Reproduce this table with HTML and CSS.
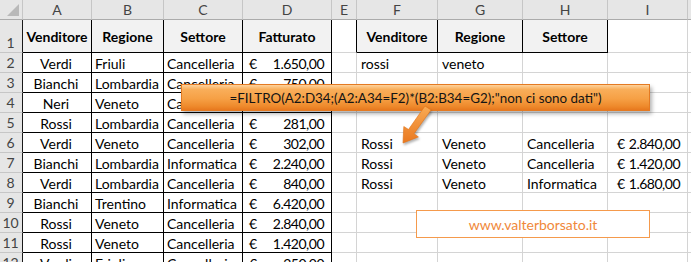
FILE: index.html
```html
<!DOCTYPE html>
<html lang="it">
<head>
<meta charset="utf-8">
<title>FILTRO</title>
<link rel="stylesheet" href="styles.css">
</head>
<body>
<div class="sheet">
  <!-- column headers -->
  <div class="corner"><span class="corner-tri"></span></div>
  <div class="ch">A</div><div class="ch">B</div><div class="ch">C</div><div class="ch">D</div><div class="ch">E</div>
  <div class="ch">F</div><div class="ch">G</div><div class="ch">H</div><div class="ch">I</div><div class="ch ch-last"></div>

  <!-- row 1 -->
  <div class="rh rh-tall rh-edge">1</div>
  <div class="c hd bk">Venditore</div><div class="c hd bk">Regione</div><div class="c hd bk">Settore</div><div class="c hd bk">Fatturato</div>
  <div class="c bk-r"></div>
  <div class="c hd bk">Venditore</div><div class="c hd bk">Regione</div><div class="c hd bk">Settore</div>
  <div class="c"></div><div class="c c-last"></div>

  <!-- row 2 -->
  <div class="rh rh-edge">2</div>
  <div class="c bk ctr">Verdi</div><div class="c bk">Friuli</div><div class="c bk">Cancelleria</div>
  <div class="c bk cur"><span>€</span><span class="amt">1.650,00</span></div>
  <div class="c"></div>
  <div class="c txt">rossi</div><div class="c txt">veneto</div><div class="c"></div><div class="c"></div><div class="c c-last"></div>

  <!-- row 3 -->
  <div class="rh rh-edge">3</div>
  <div class="c bk ctr">Bianchi</div><div class="c bk">Lombardia</div><div class="c bk">Cancelleria</div>
  <div class="c bk cur"><span>€</span><span class="amt">750,00</span></div>
  <div class="c"></div><div class="c"></div><div class="c"></div><div class="c"></div><div class="c"></div><div class="c c-last"></div>

  <!-- row 4 -->
  <div class="rh rh-edge">4</div>
  <div class="c bk ctr">Neri</div><div class="c bk">Veneto</div><div class="c bk">Cancelleria</div>
  <div class="c bk cur"><span>€</span><span class="amt">1.180,00</span></div>
  <div class="c"></div><div class="c"></div><div class="c"></div><div class="c"></div><div class="c"></div><div class="c c-last"></div>

  <!-- row 5 -->
  <div class="rh rh-edge">5</div>
  <div class="c bk ctr">Rossi</div><div class="c bk">Lombardia</div><div class="c bk">Cancelleria</div>
  <div class="c bk cur"><span>€</span><span class="amt">281,00</span></div>
  <div class="c"></div><div class="c"></div><div class="c"></div><div class="c"></div><div class="c"></div><div class="c c-last"></div>

  <!-- row 6 -->
  <div class="rh rh-edge">6</div>
  <div class="c bk ctr">Verdi</div><div class="c bk">Veneto</div><div class="c bk">Cancelleria</div>
  <div class="c bk cur"><span>€</span><span class="amt">302,00</span></div>
  <div class="c"></div>
  <div class="c txt">Rossi</div><div class="c txt">Veneto</div><div class="c txt">Cancelleria</div>
  <div class="c cur cur-i"><span>€</span><span class="amt">2.840,00</span></div><div class="c c-last"></div>

  <!-- row 7 -->
  <div class="rh rh-edge">7</div>
  <div class="c bk ctr">Bianchi</div><div class="c bk">Lombardia</div><div class="c bk">Informatica</div>
  <div class="c bk cur"><span>€</span><span class="amt">2.240,00</span></div>
  <div class="c"></div>
  <div class="c txt">Rossi</div><div class="c txt">Veneto</div><div class="c txt">Cancelleria</div>
  <div class="c cur cur-i"><span>€</span><span class="amt">1.420,00</span></div><div class="c c-last"></div>

  <!-- row 8 -->
  <div class="rh rh-edge">8</div>
  <div class="c bk ctr">Verdi</div><div class="c bk">Lombardia</div><div class="c bk">Cancelleria</div>
  <div class="c bk cur"><span>€</span><span class="amt">840,00</span></div>
  <div class="c"></div>
  <div class="c txt">Rossi</div><div class="c txt">Veneto</div><div class="c txt">Informatica</div>
  <div class="c cur cur-i"><span>€</span><span class="amt">1.680,00</span></div><div class="c c-last"></div>

  <!-- row 9 -->
  <div class="rh rh-edge">9</div>
  <div class="c bk ctr">Bianchi</div><div class="c bk">Trentino</div><div class="c bk">Informatica</div>
  <div class="c bk cur"><span>€</span><span class="amt">6.420,00</span></div>
  <div class="c"></div><div class="c"></div><div class="c"></div><div class="c"></div><div class="c"></div><div class="c c-last"></div>

  <!-- row 10 -->
  <div class="rh rh-edge">10</div>
  <div class="c bk ctr">Rossi</div><div class="c bk">Veneto</div><div class="c bk">Cancelleria</div>
  <div class="c bk cur"><span>€</span><span class="amt">2.840,00</span></div>
  <div class="c"></div><div class="c"></div><div class="c"></div><div class="c"></div><div class="c"></div><div class="c c-last"></div>

  <!-- row 11 -->
  <div class="rh rh-edge">11</div>
  <div class="c bk ctr">Rossi</div><div class="c bk">Veneto</div><div class="c bk">Cancelleria</div>
  <div class="c bk cur"><span>€</span><span class="amt">1.420,00</span></div>
  <div class="c"></div><div class="c"></div><div class="c"></div><div class="c"></div><div class="c"></div><div class="c c-last"></div>

  <!-- row 12 -->
  <div class="rh rh-edge">12</div>
  <div class="c bk ctr">Verdi</div><div class="c bk">Friuli</div><div class="c bk">Cancelleria</div>
  <div class="c bk cur"><span>€</span><span class="amt">250,00</span></div>
  <div class="c"></div><div class="c"></div><div class="c"></div><div class="c"></div><div class="c"></div><div class="c c-last"></div>
</div>

<!-- formula callout shape floating over the sheet -->
<div class="callout">=FILTRO(A2:D34;(A2:A34=F2)*(B2:B34=G2);"non ci sono dati")</div>
<svg class="arrow" width="60" height="50" viewBox="390 100 60 50" aria-hidden="true">
  <defs>
    <linearGradient id="arrowFill" x1="0" y1="0" x2="0" y2="1">
      <stop offset="0" stop-color="#f9ab55"/>
      <stop offset="1" stop-color="#e9781f"/>
    </linearGradient>
  </defs>
  <polygon points="431,110 425,106 408.5,129.5 403.8,126.5 403,143 418.4,136.9 414,133.7" fill="url(#arrowFill)" stroke="#e27214" stroke-width="0.6"/>
</svg>

<div class="stamp">www.valterborsato.it</div>
</body>
</html>
```

FILE: styles.css
```css
* { box-sizing: border-box; }

html, body {
  margin: 0;
  padding: 0;
  width: 691px;
  height: 262px;
  overflow: hidden;
  background: #fff;
}

body {
  position: relative;
  font-family: Lato, "Liberation Sans", sans-serif;
  font-size: 14px;
  color: #000;
}

/* worksheet grid: row header + columns A..I + a sliver of J */
.sheet {
  display: grid;
  grid-template-columns: 23px 69px 72px 79px 89px 25px 81px 85px 85px 80px 4px;
  grid-template-rows: 20px 33px repeat(10, 20px) 20px;
}

.corner {
  position: relative;
  background: #e6e6e6;
  border-right: 1px solid #c6c6c6;
  border-bottom: 1px solid #ababab;
}
.corner-tri {
  position: absolute;
  right: 3px;
  bottom: 3px;
  width: 0;
  height: 0;
  border-left: 12px solid transparent;
  border-bottom: 12px solid #b9b9b9;
}

.ch {
  background: #e6e6e6;
  border-right: 1px solid #c6c6c6;
  border-bottom: 1px solid #ababab;
  color: #444;
  display: flex;
  align-items: center;
  justify-content: center;
  font-size: 14px;
}
.ch-last { border-right: none; }

.rh {
  background: #e6e6e6;
  border-right: 1px solid #ababab;
  border-bottom: 1px solid #c6c6c6;
  color: #444;
  display: flex;
  align-items: center;
  justify-content: center;
  font-size: 14px;
  padding-right: 1px;
}
.rh-tall { align-items: flex-end; padding-bottom: 1px; }
.rh-edge { border-right-color: #1a1a1a; }

.c {
  border-right: 1px solid #d4d4d4;
  border-bottom: 1px solid #d4d4d4;
  display: flex;
  align-items: center;
  padding: 1px 2px 0 3px;
  white-space: nowrap;
  overflow: visible;
}
.c-last { border-right: none; }

/* cells inside a bordered table */
.bk {
  border-right-color: #000;
  border-bottom-color: #000;
}
.bk-r { border-right-color: #000; }

.hd {
  background: #f2f2f2;
  font-weight: 700;
  justify-content: center;
  padding-left: 0;
  padding-right: 0;
}
.ctr { justify-content: center; padding-left: 0; }
.txt { padding-left: 4px; }

/* accounting format: symbol on the left, amount on the right */
.cur {
  justify-content: space-between;
  padding-left: 6px;
  padding-right: 7px;
}
.cur-i { padding-left: 9px; padding-right: 7px; }
.amt { letter-spacing: -0.5px; }

/* orange formula callout */
.callout {
  position: absolute;
  left: 181px;
  top: 84px;
  width: 469px;
  height: 27px;
  display: flex;
  align-items: center;
  justify-content: center;
  font-size: 13.4px;
  color: #141414;
  white-space: nowrap;
  background: linear-gradient(#fdd29c 0%, #f9ae5a 18%, #f6a045 55%, #ee8a2c 85%, #e7781e 100%);
  border: 1px solid #e47a22;
  box-shadow: 2px 3px 4px rgba(0, 0, 0, 0.3);
}

.arrow {
  position: absolute;
  left: 390px;
  top: 100px;
  overflow: visible;
  filter: drop-shadow(1px 2px 1px rgba(0, 0, 0, 0.3));
}

/* site stamp */
.stamp {
  position: absolute;
  left: 416px;
  top: 210px;
  width: 234px;
  height: 28px;
  background: #fff;
  border: 1px solid #f59a4c;
  color: #f0883a;
  font-size: 14px;
  display: flex;
  align-items: center;
  justify-content: center;
}
```
